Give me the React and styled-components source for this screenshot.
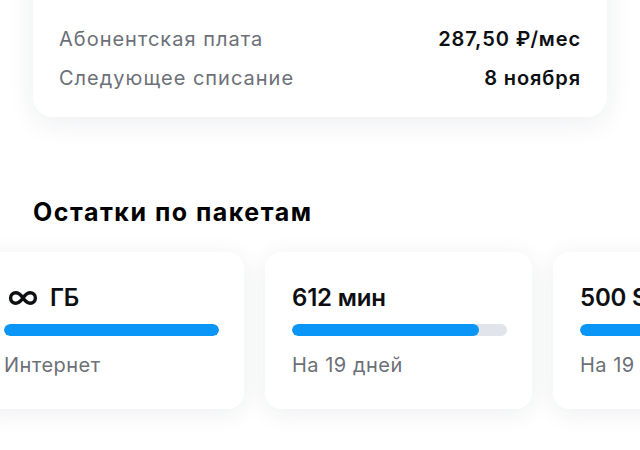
import styled, { createGlobalStyle } from "styled-components";

const GlobalStyle = createGlobalStyle`
  html, body {
    margin: 0;
    background: #ffffff;
    font-family: Inter, "Noto Sans", sans-serif;
    overflow: hidden;
  }
`;

const Page = styled.div`
  width: 640px;
  height: 450px;
  overflow: hidden;
`;

const TariffCard = styled.div`
  margin: -40px 33px 0;
  padding: 59px 26px 20px;
  background: #fff;
  border-radius: 20px;
  box-shadow: 0 6px 28px rgba(30, 40, 60, 0.08);
`;

const Row = styled.div`
  display: flex;
  justify-content: space-between;
  align-items: center;
  height: 39px;
`;

const Label = styled.span`
  font-size: 20px;
  letter-spacing: 1px;
  color: #6c7077;
`;

const Value = styled.span`
  font-size: 20px;
  font-weight: 600;
  letter-spacing: 0.9px;
  color: #0d0f12;
`;

const Heading = styled.h2`
  margin: 80px 33px 0;
  font-size: 25px;
  line-height: 30px;
  font-weight: 700;
  letter-spacing: 1.5px;
  color: #000;
`;

const Track = styled.div`
  display: flex;
  gap: 21px;
  margin: 25px 0 0 -23px;
  padding-bottom: 30px;
`;

const PackCard = styled.div`
  flex: 0 0 267px;
  height: 157px;
  box-sizing: border-box;
  padding: 32px 25px 0 27px;
  background: #fff;
  border-radius: 16px;
  box-shadow: 0 4px 24px rgba(30, 40, 60, 0.08);
`;

const Amount = styled.div`
  display: flex;
  align-items: center;
  gap: 12px;
  font-size: 24px;
  line-height: 28px;
  font-weight: 600;
  letter-spacing: -0.2px;
  color: #0d0f12;
  white-space: nowrap;
`;

const Bar = styled.div`
  margin-top: 12px;
  height: 12px;
  border-radius: 6px;
  background: #e1e4ea;
  overflow: hidden;
`;

const Fill = styled.div`
  height: 100%;
  border-radius: 6px;
  background: #0a96f7;
`;

const Caption = styled.div`
  margin-top: 17px;
  font-size: 20px;
  line-height: 24px;
  letter-spacing: 0.5px;
  color: #6c7077;
  white-space: nowrap;
`;

const Infinity = () => (
  <svg width="34" height="16" viewBox="0 0 34 16" aria-hidden="true">
    <path
      d="M19 8c-2.6-3.6-4.6-5.2-7.2-5.2a5.2 5.2 0 0 0 0 10.4c2.6 0 4.6-1.6 7.2-5.2zm0 0c2.6 3.6 4.6 5.2 7.2 5.2a5.2 5.2 0 0 0 0-10.4c-2.6 0-4.6 1.6-7.2 5.2z"
      fill="none"
      stroke="#0d0f12"
      strokeWidth="3.4"
    />
  </svg>
);

const packs = [
  { amount: "ГБ", unlimited: true, left: 100, caption: "Интернет" },
  { amount: "612 мин", left: 87, caption: "На 19 дней" },
  { amount: "500 SMS", left: 100, caption: "На 19 дней" },
];

export default function App() {
  return (
    <Page>
      <GlobalStyle />
      <TariffCard>
        <Row>
          <Label>Абонентская плата</Label>
          <Value>287,50 ₽/мес</Value>
        </Row>
        <Row>
          <Label>Следующее списание</Label>
          <Value>8 ноября</Value>
        </Row>
      </TariffCard>

      <Heading>Остатки по пакетам</Heading>

      <Track>
        {packs.map((p) => (
          <PackCard key={p.caption + p.amount}>
            <Amount>
              {p.unlimited && <Infinity />}
              {p.amount}
            </Amount>
            <Bar>
              <Fill style={{ width: `${p.left}%` }} />
            </Bar>
            <Caption>{p.caption}</Caption>
          </PackCard>
        ))}
      </Track>
    </Page>
  );
}
